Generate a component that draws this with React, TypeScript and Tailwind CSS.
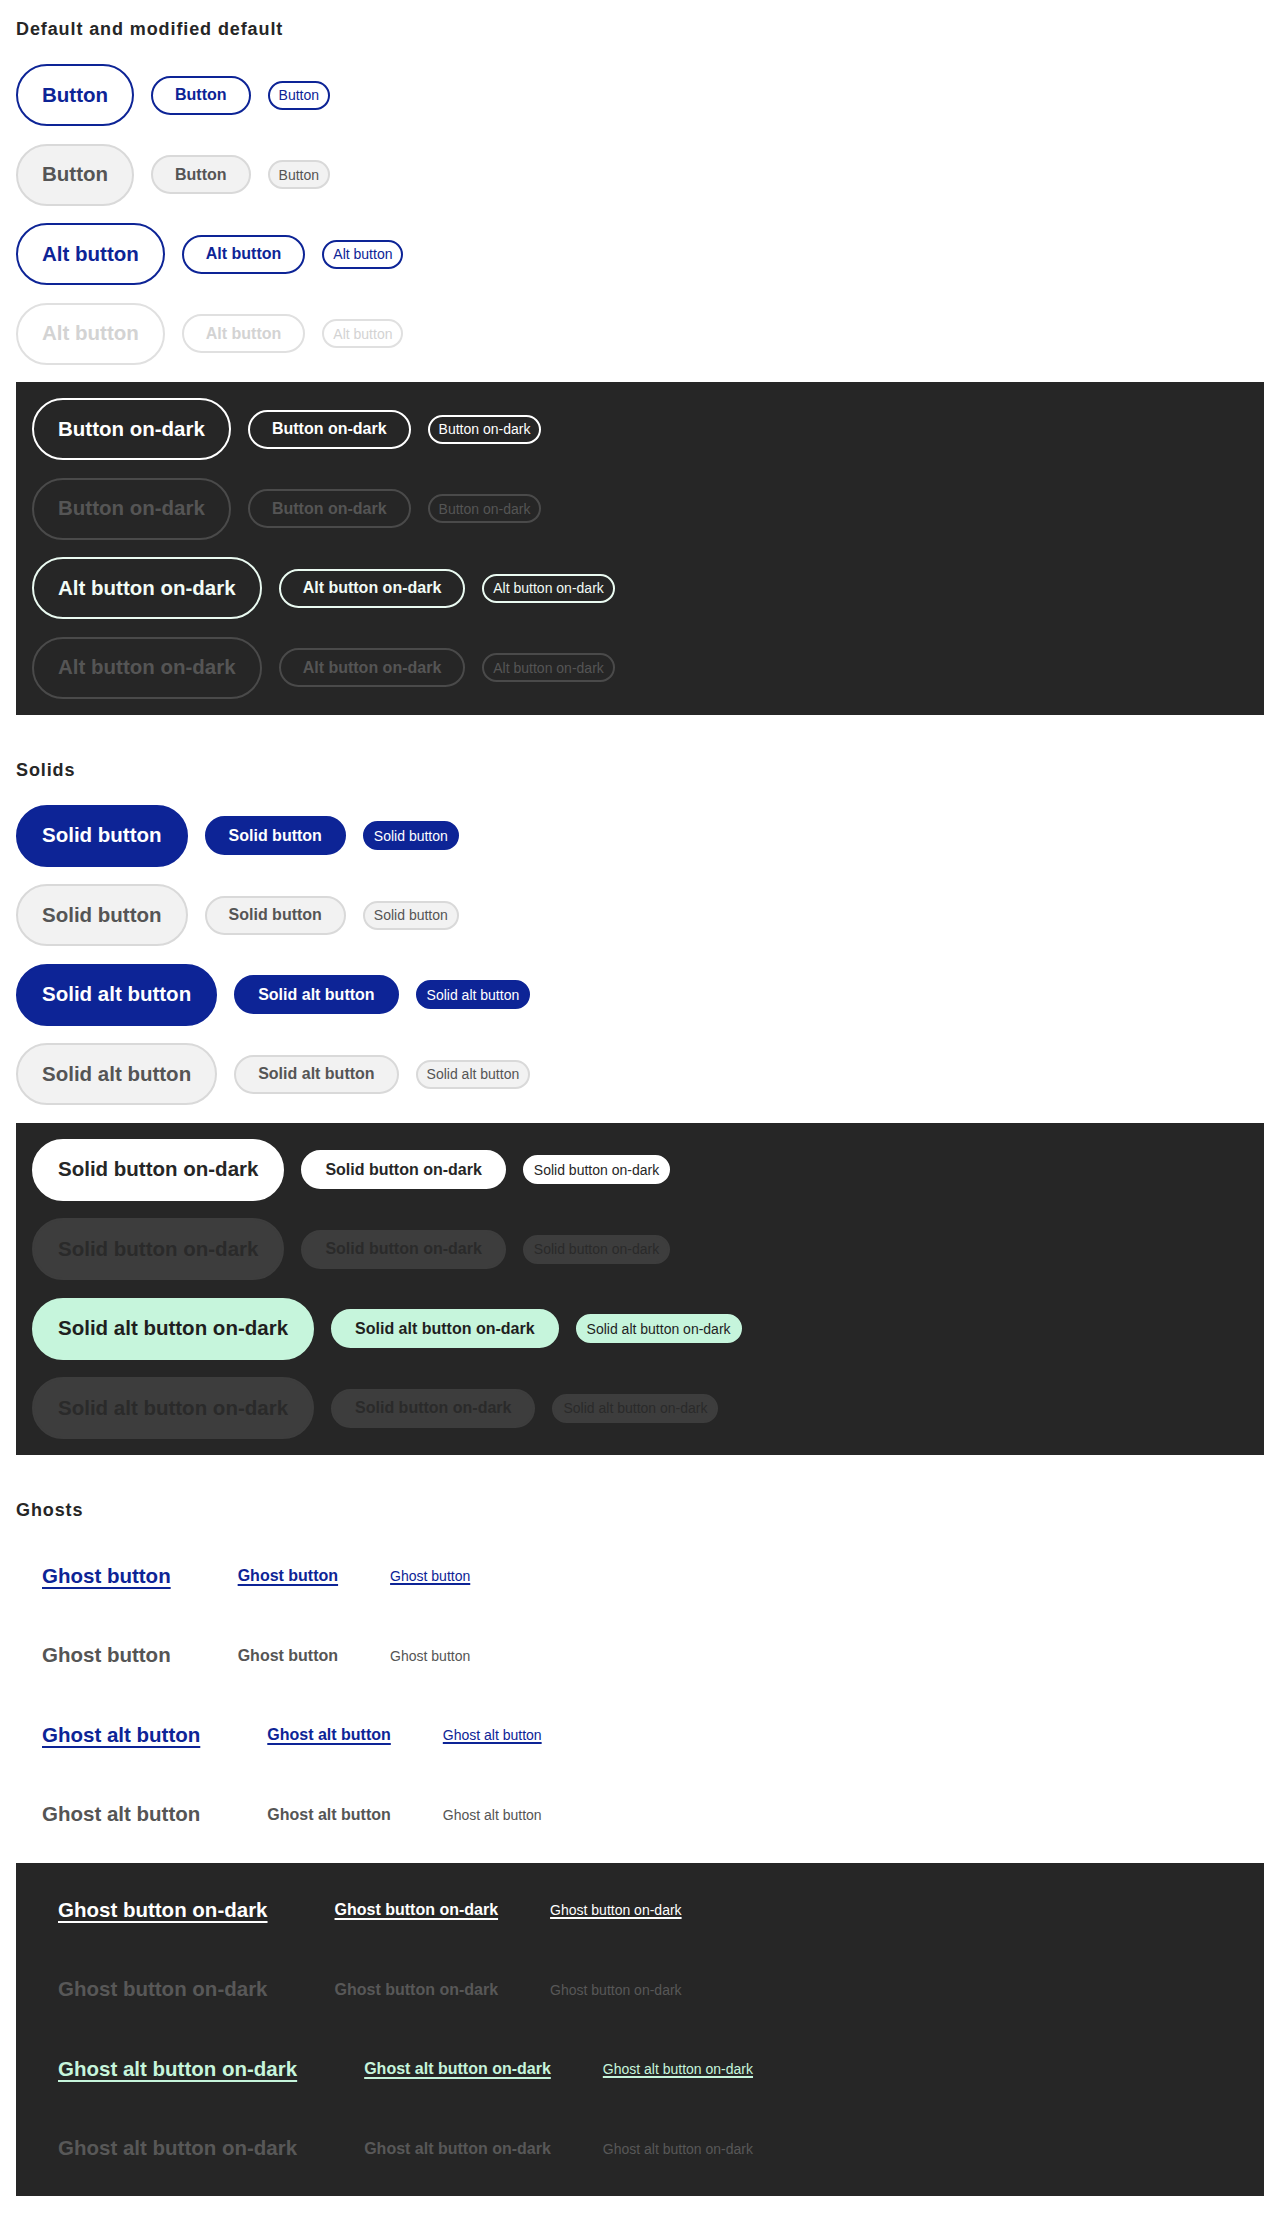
import React from 'react';

type Size = 'lg' | 'md' | 'sm';

const sizes: Record<Size, string> = {
    lg: 'h-[62px] px-[24px] text-[20.5px] font-bold',
    md: 'h-[39px] px-[22px] text-[16px] font-bold',
    sm: 'h-[29px] px-[9px] text-[14px] font-normal',
};

const ghostLine: Record<Size, string> = {
    lg: 'underline decoration-2 underline-offset-[4px]',
    md: 'underline decoration-2 underline-offset-[3px]',
    sm: 'underline decoration-[1.5px] underline-offset-[2px]',
};

const variants = {
    outline: 'border-[#0d2496] bg-white text-[#0d2496]',
    outlineOff: 'border-[#d9d9d9] bg-[#f2f2f2] text-[#555555]',
    altOff: 'border-[#e0e0e0] bg-white text-[#d3d3d3]',
    dark: 'border-white text-white',
    darkOff: 'border-[#4a4a4a] text-[#555555]',
    darkAlt: 'border-[#eafaf1] text-[#f2fcf6]',
    solid: 'border-[#0d2496] bg-[#0d2496] text-white',
    solidOff: 'border-[#d9d9d9] bg-[#f2f2f2] text-[#555555]',
    solidDark: 'border-white bg-white text-[#262626]',
    solidDarkOff: 'border-[#3d3d3d] bg-[#3d3d3d] text-[#2a2a2a]',
    solidDarkAlt: 'border-[#c6f5dc] bg-[#c6f5dc] text-[#1f1f1f]',
    ghost: 'border-transparent text-[#0d2496]',
    ghostOff: 'border-transparent text-[#555555]',
    ghostDark: 'border-transparent text-white',
    ghostDarkOff: 'border-transparent text-[#585858]',
    ghostDarkAlt: 'border-transparent text-[#c6f5dc]',
};

type Variant = keyof typeof variants;

const underlined: Variant[] = ['ghost', 'ghostDark', 'ghostDarkAlt'];

function Btn({ size, variant, children }: { size: Size; variant: Variant; children: React.ReactNode }) {
    const line = underlined.includes(variant) ? ghostLine[size] : '';
    return (
        <span className={`inline-flex shrink-0 items-center justify-center whitespace-nowrap rounded-full border-2 leading-none ${sizes[size]} ${variants[variant]}`}>
            <span className={line}>{children}</span>
        </span>
    );
}

function Row({ variant, label, midLabel }: { variant: Variant; label: string; midLabel?: string }) {
    return (
        <div className="flex h-[62px] items-center gap-[17px]">
            <Btn size="lg" variant={variant}>{label}</Btn>
            <Btn size="md" variant={variant}>{midLabel ?? label}</Btn>
            <Btn size="sm" variant={variant}>{label}</Btn>
        </div>
    );
}

function Section({ title, light, dark }: { title: string; light: React.ReactNode; dark: React.ReactNode }) {
    return (
        <section>
            <h2 className="h-6 text-[18px] font-bold leading-6 tracking-[0.9px] text-[#262626]">{title}</h2>
            <div className="mt-[23px] flex flex-col gap-[17.5px]">
                {light}
                <div className="flex flex-col gap-[17.5px] bg-[#262626] p-4">
                    {dark}
                </div>
            </div>
        </section>
    );
}

export default function App() {
    return (
        <div className="flex min-h-[2214px] flex-col gap-[43px] bg-white px-4 pb-4 pt-[17px] font-['Liberation_Sans',Arial,sans-serif]">
            <Section
                title="Default and modified default"
                light={
                    <>
                        <Row variant="outline" label="Button" />
                        <Row variant="outlineOff" label="Button" />
                        <Row variant="outline" label="Alt button" />
                        <Row variant="altOff" label="Alt button" />
                    </>
                }
                dark={
                    <>
                        <Row variant="dark" label="Button on-dark" />
                        <Row variant="darkOff" label="Button on-dark" />
                        <Row variant="darkAlt" label="Alt button on-dark" />
                        <Row variant="darkOff" label="Alt button on-dark" />
                    </>
                }
            />
            <Section
                title="Solids"
                light={
                    <>
                        <Row variant="solid" label="Solid button" />
                        <Row variant="solidOff" label="Solid button" />
                        <Row variant="solid" label="Solid alt button" />
                        <Row variant="solidOff" label="Solid alt button" />
                    </>
                }
                dark={
                    <>
                        <Row variant="solidDark" label="Solid button on-dark" />
                        <Row variant="solidDarkOff" label="Solid button on-dark" />
                        <Row variant="solidDarkAlt" label="Solid alt button on-dark" />
                        <Row variant="solidDarkOff" label="Solid alt button on-dark" midLabel="Solid button on-dark" />
                    </>
                }
            />
            <Section
                title="Ghosts"
                light={
                    <>
                        <Row variant="ghost" label="Ghost button" />
                        <Row variant="ghostOff" label="Ghost button" />
                        <Row variant="ghost" label="Ghost alt button" />
                        <Row variant="ghostOff" label="Ghost alt button" />
                    </>
                }
                dark={
                    <>
                        <Row variant="ghostDark" label="Ghost button on-dark" />
                        <Row variant="ghostDarkOff" label="Ghost button on-dark" />
                        <Row variant="ghostDarkAlt" label="Ghost alt button on-dark" />
                        <Row variant="ghostDarkOff" label="Ghost alt button on-dark" />
                    </>
                }
            />
        </div>
    );
}
